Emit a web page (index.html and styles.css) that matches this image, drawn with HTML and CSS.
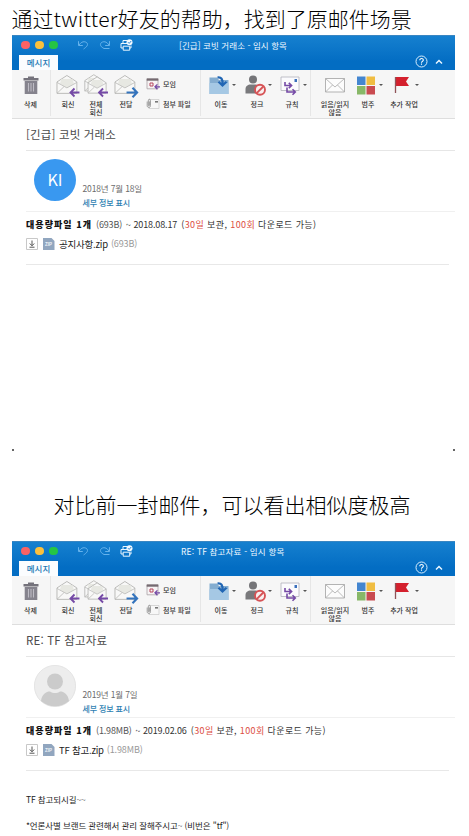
FILE: index.html
```html
<!DOCTYPE html>
<html lang="ko">
<head>
<meta charset="utf-8">
<title>메시지</title>
<link rel="stylesheet" href="styles.css">
</head>
<body>
<svg class="defs" aria-hidden="true">
  <symbol id="undo" viewBox="0 0 12 10"><path d="M1.500 1.200v4.300h4.300M2 5.200C4 1.400 8 .8 10 3c1.500 2-.5 4-3.400 6" fill="none" stroke="#65b2ec"/></symbol>
  <symbol id="redo" viewBox="0 0 12 10"><path d="M10.500 1.200v4.300H6.200M10 5.200C8 1.400 4 .8 2 3 .6 5 2 7 5 8.500h5.500" fill="none" stroke="#65b2ec"/></symbol>
  <symbol id="print" viewBox="0 0 13 12"><g fill="none" stroke="#eaf6ff"><path d="M3 4.500V1.500h4M3 9H1V4.500h7M11 6.500V9h-1.500M3.200 7.200h6.500v4H3.200z"/></g><circle cx="9.500" cy="3.300" r="3" fill="#f4faff"/><path d="m8 3.200 1.200 1.200L11.200 2" fill="none" stroke="#1678ca" stroke-width=".9"/></symbol>
  <symbol id="help" viewBox="0 0 13 13"><circle cx="6.500" cy="6.500" r="5.500" fill="none" stroke="#d9efff"/><path d="M4.800 5.200c0-2.400 3.600-2.200 3.500-.1C8.200 6.400 6.500 6.300 6.500 7.700M6.500 8.600v1.200" fill="none" stroke="#fff" stroke-width="1.100"/></symbol>
  <symbol id="trash" viewBox="0 0 24 24"><path d="M4.500 5h15v2.400h-15zM9 3.500h6v2H9z" fill="#74727b"/><path d="M5.700 8h12.600v13H5.700z" fill="#85838d"/><path d="M9.500 10v8.500M12 10v8.500M14.500 10v8.500" stroke="#bdbbc4" stroke-width="1.100"/></symbol>
  <symbol id="mail-open" viewBox="0 0 24 24"><path d="M2 9 12 2.500 22 9v11.500H2z" fill="#f8f8f7" stroke="#b4b4b2" stroke-width=".9"/><path d="m5 10.500 1.500-4.500h11l1.500 4.500-7 4.500z" fill="#e7e8e2"/><path d="m2 9.500 10 5.500 10-5.500M2 20.500l7-6.700" fill="none" stroke="#b8b8b6" stroke-width=".8"/></symbol>
  <symbol id="back" viewBox="0 0 12 10"><path d="M11 5H2.500M6 1 2 5l4 4" fill="none" stroke="#754aa6" stroke-width="1.900"/></symbol>
  <symbol id="reply" viewBox="0 0 24 24"><use href="#mail-open" x="0" y="0" width="22" height="22"/><use href="#back" x="12.500" y="13" width="11" height="10"/></symbol>
  <symbol id="reply-all" viewBox="0 0 24 24"><use href="#mail-open" x="0" y="-.5" width="20" height="20"/><use href="#mail-open" x="3" y="1.500" width="20" height="20"/><use href="#back" x="13" y="13" width="11" height="10"/></symbol>
  <symbol id="forward" viewBox="0 0 24 24"><use href="#mail-open" x="0" y="0" width="22" height="22"/><path d="M12.500 18h9M18 13.700l4.200 4.300-4.200 4.300" fill="none" stroke="#3474bd" stroke-width="2"/></symbol>
  <symbol id="meeting" viewBox="0 0 14 12"><path d="M1 .8h11v10H1z" fill="#f7f3f4" stroke="#a9a1a6" stroke-width=".8"/><path d="M.7.500h11.600v2.200H.7z" fill="#756a70"/><path d="M4 5h3v3H4z" fill="none" stroke="#b5475f"/><path d="M14 8.800H9.200M11.400 6.400 9 8.800l2.400 2.400" fill="none" stroke="#754aa6" stroke-width="1.300"/></symbol>
  <symbol id="clip" viewBox="0 0 14 12"><path d="M3 1.500h10v9H3z" fill="#f7f7f7" stroke="#c9c9c9" stroke-width=".7"/><path d="M1.200 3.500v4.200c0 2.400 3.300 2.400 3.300 0V2.600c0-1.800-2.200-1.800-2.200 0v4.700c0 .8 1.100.8 1.100 0V3.500" fill="none" stroke="#8b8b8b" stroke-width=".8"/><path d="M9 3h3v1.600H9z" fill="#777"/></symbol>
  <symbol id="move" viewBox="0 0 24 24"><path d="M2.500 7V4.500h7.500l2 2.500h9.500V21h-19z" fill="#84add0"/><path d="M2.500 10h19v11h-19z" fill="#a5c8e4"/><path d="M10.500 4.500c3.800-.5 5.500 1.500 5 7M11.500 8.800l4 3.800 4-3.800" fill="none" stroke="#2166b4" stroke-width="2.200"/></symbol>
  <symbol id="junk" viewBox="0 0 24 24"><circle cx="10" cy="6.500" r="4" fill="#757578"/><path d="M2.500 20.500V16c0-3 2.500-4.500 5-4.500h5c2.500 0 4 2 4 4v5z" fill="#79797c"/><circle cx="17" cy="16.800" r="5" fill="#f8efef" stroke="#d65356" stroke-width="1.900"/><path d="m13.700 20.100 6.600-6.600" stroke="#d65356" stroke-width="1.900"/></symbol>
  <symbol id="rules" viewBox="0 0 24 24"><path d="M3 4h18v13.500H3z" fill="#fbfbfd" stroke="#b3b3bb" stroke-width=".8"/><path d="M16.500 6h2.500v3h-2.500z" fill="#3b70bc"/><path d="M7 9v3.500h6M10.800 9.800l2.800 2.700-2.800 2.700M9 14.500V19h8M14.500 16.200l2.800 2.800-2.800 2.800" fill="none" stroke="#754aa6" stroke-width="1.600"/></symbol>
  <symbol id="envelope" viewBox="0 0 24 24"><path d="M2.500 5.500h19v13.500h-19z" fill="#fcfcfc" stroke="#aaa" stroke-width=".9"/><path d="m2.500 5.500 9.500 8.500 9.500-8.500M2.500 19l7-7M21.500 19l-7-7" fill="none" stroke="#aaa" stroke-width=".8"/></symbol>
  <symbol id="category" viewBox="0 0 24 24"><path d="M3 3.500h8.500V12H3z" fill="#4486d0"/><path d="M12.500 3.500H21V12h-8.500z" fill="#f0bd42"/><path d="M3 13h8.500v8.500H3z" fill="#88b868"/><path d="M12.500 13H21v8.500h-8.500z" fill="#c94b50"/></symbol>
  <symbol id="flag" viewBox="0 0 24 24"><path d="M5.500 4H19l-3 4.500 3 4.500H5.500z" fill="#d4202d"/><path d="M5.500 4v16" stroke="#8f5458" stroke-width="1.300"/></symbol>
  <symbol id="download" viewBox="0 0 12 12"><path d="M.5.500h11v11H.5z" fill="#fff" stroke="#c8c8c8"/><path d="M6 2.500v5M3.800 5.500 6 7.800l2.200-2.300M3.500 9.200h5" fill="none" stroke="#555"/></symbol>
  <symbol id="person" viewBox="0 0 42 42"><circle cx="21" cy="21" r="20.600" fill="#ededed" stroke="#dfdfdf" stroke-width=".8"/><circle cx="21" cy="16.500" r="8" fill="#cbcbcb"/><path d="M7 36c1-7 5-9.500 9-9.500 3 2 7 2 10 0 4 0 8 2.500 9 9.500-8 7-20 7-28 0z" fill="#cbcbcb"/></symbol>
</svg>

<h1 class="caption first" lang="zh">通过<span class="latin">twitter</span>好友的帮助，找到了原邮件场景</h1>

<section class="window one">
  <header class="titlebar">
    <div class="bar"><i class="dot red"></i><i class="dot yellow"></i><i class="dot green"></i><svg class="undo"><use href="#undo"/></svg><svg class="redo"><use href="#redo"/></svg><svg class="print"><use href="#print"/></svg><span class="title t1">[긴급] 코빗 거래소 - 임시 항목</span></div>
    <div class="tabs"><span class="tab">메시지</span><svg class="help"><use href="#help"/></svg><svg class="chevron" viewBox="0 0 8 6"><path d="m1 4.500 3-3 3 3" fill="none" stroke="#e8f6ff" stroke-width="1.500"/></svg></div>
  </header>
  <nav class="ribbon">
    <div class="tool"><svg><use href="#trash"/></svg><span>삭제</span></div>
    <i class="rule"></i>
    <div class="tool mail"><svg><use href="#reply"/></svg><span>회신</span></div>
    <div class="tool mail"><svg><use href="#reply-all"/></svg><span>전체<br>회신</span></div>
    <div class="tool mail"><svg><use href="#forward"/></svg><span>전달</span></div>
    <div class="stack"><div><svg><use href="#meeting"/></svg>모임</div><div><svg><use href="#clip"/></svg>첨부 파일</div></div>
    <i class="rule"></i>
    <div class="tool more"><svg><use href="#move"/></svg><span>이동</span></div>
    <div class="tool more"><svg><use href="#junk"/></svg><span>정크</span></div>
    <div class="tool more"><svg><use href="#rules"/></svg><span>규칙</span></div>
    <i class="rule"></i>
    <div class="tool"><svg><use href="#envelope"/></svg><span>읽음/읽지<br>않음</span></div>
    <div class="tool more"><svg><use href="#category"/></svg><span>범주</span></div>
    <div class="tool more"><svg><use href="#flag"/></svg><span>추가 작업</span></div>
  </nav>
  <h2 class="subject s1">[긴급] 코빗 거래소</h2>
  <div class="sender"><div class="avatar">KI</div><div class="meta"><time>2018년 7월 18일</time><a>세부 정보 표시</a></div></div>
  <div class="files">
    <p class="summary"><b>대용량파일 1개</b><span class="size">(693B)</span><span class="date">~ 2018.08.17</span><span class="limit">(<em>30일</em> 보관, <em>100회</em> 다운로드 가능)</span></p>
    <p class="file"><svg><use href="#download"/></svg><span class="zip">ZIP</span><span class="name">공지사항.zip</span><span class="fsize">(693B)</span></p>
  </div>
  <div class="corners"><i></i><i></i></div>
</section>

<h1 class="caption second" lang="zh">对比前一封邮件，可以看出相似度极高</h1>

<section class="window two">
  <header class="titlebar">
    <div class="bar"><i class="dot red"></i><i class="dot yellow"></i><i class="dot green"></i><svg class="undo"><use href="#undo"/></svg><svg class="redo"><use href="#redo"/></svg><svg class="print"><use href="#print"/></svg><span class="title t2">RE: TF 참고자료 - 임시 항목</span></div>
    <div class="tabs"><span class="tab">메시지</span><svg class="help"><use href="#help"/></svg><svg class="chevron" viewBox="0 0 8 6"><path d="m1 4.500 3-3 3 3" fill="none" stroke="#e8f6ff" stroke-width="1.500"/></svg></div>
  </header>
  <nav class="ribbon">
    <div class="tool"><svg><use href="#trash"/></svg><span>삭제</span></div>
    <i class="rule"></i>
    <div class="tool mail"><svg><use href="#reply"/></svg><span>회신</span></div>
    <div class="tool mail"><svg><use href="#reply-all"/></svg><span>전체<br>회신</span></div>
    <div class="tool mail"><svg><use href="#forward"/></svg><span>전달</span></div>
    <div class="stack"><div><svg><use href="#meeting"/></svg>모임</div><div><svg><use href="#clip"/></svg>첨부 파일</div></div>
    <i class="rule"></i>
    <div class="tool more"><svg><use href="#move"/></svg><span>이동</span></div>
    <div class="tool more"><svg><use href="#junk"/></svg><span>정크</span></div>
    <div class="tool more"><svg><use href="#rules"/></svg><span>규칙</span></div>
    <i class="rule"></i>
    <div class="tool"><svg><use href="#envelope"/></svg><span>읽음/읽지<br>않음</span></div>
    <div class="tool more"><svg><use href="#category"/></svg><span>범주</span></div>
    <div class="tool more"><svg><use href="#flag"/></svg><span>추가 작업</span></div>
  </nav>
  <h2 class="subject s2">RE: TF 참고자료</h2>
  <div class="sender"><svg class="photo"><use href="#person"/></svg><div class="meta"><time>2019년 1월 7일</time><a>세부 정보 표시</a></div></div>
  <div class="files">
    <p class="summary"><b>대용량파일 1개</b><span class="size">(1.98MB)</span><span class="date">~ 2019.02.06</span><span class="limit">(<em>30일</em> 보관, <em>100회</em> 다운로드 가능)</span></p>
    <p class="file"><svg><use href="#download"/></svg><span class="zip">ZIP</span><span class="name">TF 참고.zip</span><span class="fsize">(1.98MB)</span></p>
  </div>
  <div class="body"><p>TF 참고되시길~~</p><p>*언론사별 브랜드 관련해서 관리 잘해주시고~ (비번은 "tf")</p></div>
</section>
</body>
</html>
```
FILE: styles.css
```css
* { box-sizing: border-box; }
html, body { margin: 0; background: #fff; }
body { width: 469px; height: 836px; overflow: hidden; font-family: "Noto Sans CJK KR", sans-serif; color: #333; }
h1, h2, p { margin: 0; font-weight: 400; }
svg { display: block; flex: none; }
i, em { font-style: normal; }
.defs { position: absolute; width: 0; height: 0; }

.caption { font-family: "Noto Sans CJK SC", sans-serif; font-weight: 300; font-size: 21px; line-height: 30px; color: #000; white-space: nowrap; }
.first { height: 35px; padding: 3px 0 0 11.500px; }
.latin { letter-spacing: .35px; }
.second { height: 52px; padding-left: 53.500px; margin-top: 38px; }

.window { width: 443px; margin-left: 12px; display: flex; flex-direction: column; }
.one { height: 416px; }
.two { height: 295px; }

.titlebar { height: 35px; flex: none; background: linear-gradient(#1680cf, #036dc3 75%); border-top: 1px solid #3986c2; }
.bar { height: 18px; display: flex; align-items: center; position: relative; padding-left: 9px; }
.dot { width: 8.500px; height: 8.500px; border-radius: 50%; margin-right: 5.500px; }
.red { background: #fb6264; }
.yellow { background: #fcc03c; }
.green { background: #25c545; }
.undo { width: 12px; height: 10px; margin-left: 14px; }
.redo { width: 12px; height: 10px; margin-left: 10px; }
.print { width: 13px; height: 12px; margin-left: 9px; }
.title { font-size: 8.500px; color: #f0f8ff; position: absolute; line-height: 18px; white-space: nowrap; }
.t1 { left: 167px; letter-spacing: .07px; }
.t2 { left: 169px; letter-spacing: .18px; }
.tabs { height: 16px; display: flex; align-items: center; padding-left: 7px; }
.tab { width: 39px; height: 16px; margin-top: 1px; background: #fbfdff; color: #2478b3; font-size: 8.500px; font-weight: 500; line-height: 14px; text-align: center; }
.help { width: 13px; height: 13px; margin: -1px 0 0 357px; }
.chevron { width: 8px; height: 6px; margin-left: 7px; }

.ribbon { height: 49px; flex: none; display: grid; grid-template-columns: 37px 5px 28px 28px 32px 57px 4px 36px 36px 34px 5px 42px 24px 48px; background: #f6f6f6; border-bottom: 1px solid #dedede; font-size: 7px; font-weight: 500; color: #333; line-height: 8px; }
.rule { width: 1px; height: 46px; background: #e6e6e6; margin-left: 1px; }
.tool { display: flex; flex-direction: column; align-items: center; padding-top: 4px; position: relative; white-space: nowrap; text-align: center; }
.tool svg { width: 24px; height: 24px; margin-top: -1px; }
.tool span { margin-top: 3px; }
.mail svg { width: 26px; height: 26px; margin: -1px 0 -2px; }
.more svg { margin-left: -4px; }
.more::after { content: ""; position: absolute; left: calc(50% + 11px); top: 14px; border: 2px solid transparent; border-top: 2.500px solid #555; border-bottom: 0; }
.stack { padding: 8px 0 0 4px; display: flex; flex-direction: column; gap: 8px; }
.stack div { height: 12px; display: flex; align-items: center; gap: 3px; white-space: nowrap; }
.stack svg { width: 14px; height: 12px; }

.subject { height: 32px; flex: none; margin-left: 14px; border-bottom: 1px solid #e6e6e6; font-size: 11.500px; line-height: 30px; color: #4c4c4c; white-space: nowrap; }
.s1 { letter-spacing: .15px; }
.s2 { letter-spacing: .18px; }
.sender { height: 61px; flex: none; margin-left: 14px; padding: 8px 0 0 8px; display: flex; gap: 6.500px; border-bottom: 1px solid #f0f0f0; }
.avatar { width: 42px; height: 42px; border-radius: 50%; background: #3998f0; color: #fff; font-size: 16px; line-height: 41px; text-align: center; }
.photo { width: 42px; height: 42px; }
.meta { padding-top: 22px; display: flex; flex-direction: column; font-size: 8.500px; line-height: 15px; letter-spacing: -.15px; color: #6c6c6c; white-space: nowrap; }
.meta a { color: #2d7eb1; font-weight: 500; font-size: 8px; line-height: 14px; }
.files { height: 53px; flex: none; margin: 0 6px 0 14px; padding-top: 5px; border-bottom: 1px solid #e8e8e8; font-size: 9px; line-height: 16px; white-space: nowrap; }
.summary { height: 16px; display: flex; }
.summary b { width: 66px; font-weight: 900; font-size: 9px; color: #111; letter-spacing: 1.050px; }
.summary em { color: #dc4d42; }
.size { margin-left: 4px; color: #555; letter-spacing: -.15px; }
.date { margin-left: 4px; letter-spacing: -.12px; }
.limit { margin-left: 4px; letter-spacing: .4px; }
.file { height: 16px; margin-top: 3px; display: flex; align-items: center; }
.file svg { width: 12px; height: 12px; margin-right: 4.500px; }
.zip { width: 12px; height: 12px; margin-right: 4.500px; padding-top: 4px; background: #91a6bf; clip-path: polygon(0 0, 75% 0, 100% 25%, 100% 100%, 0 100%); color: #eef4fa; font: 700 4.500px/6px "Liberation Sans", sans-serif; text-align: center; }
.name { font-size: 9.500px; color: #222; letter-spacing: -.22px; }
.fsize { margin-left: 3px; color: #999; letter-spacing: -.12px; }
.body { padding: 15px 0 0 14px; font-size: 8.500px; line-height: 26px; letter-spacing: -.11px; color: #222; white-space: nowrap; }
.corners { margin-top: auto; display: flex; justify-content: space-between; }
.corners i { width: 2px; height: 2px; border-radius: 1px; background: #333; }
```
